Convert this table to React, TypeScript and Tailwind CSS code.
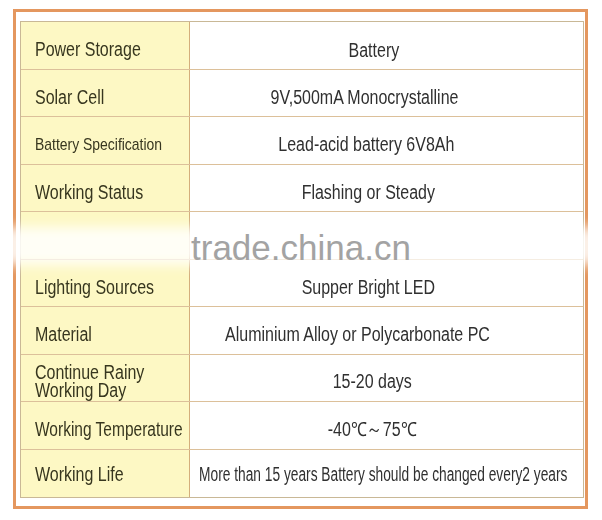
import React from 'react';

type Spec = {
  label: string;
  value: string;
  labelClass?: string;
  valueClass: string;
  valueScale?: string;
};

const specs: Spec[] = [
  { label: 'Power Storage', value: 'Battery', valueClass: 'pr-[26px] pt-[11px]' },
  { label: 'Solar Cell', value: '9V,500mA Monocrystalline', valueClass: 'pr-[44px] pt-[9px]' },
  { label: 'Battery Specification', value: 'Lead-acid battery 6V8Ah', labelClass: 'text-[17px] scale-x-[0.82]', valueClass: 'pr-[40px] pt-[9px]' },
  { label: 'Working Status', value: 'Flashing or Steady', valueClass: 'pr-[36px] pt-[9px]' },
  { label: '', value: '', valueClass: '' },
  { label: 'Lighting Sources', value: 'Supper Bright LED', valueClass: 'pr-[36px] pt-[9px]' },
  { label: 'Material', value: 'Aluminium Alloy or Polycarbonate PC', valueClass: 'pr-[58px] pt-[9px]' },
  { label: 'Continue Rainy\nWorking Day', value: '15-20 days', labelClass: 'leading-[18px] whitespace-pre-line scale-x-[0.82]', valueClass: 'pr-[28px] pt-[8px]' },
  { label: 'Working Temperature', value: '-40℃～75℃', labelClass: 'scale-x-[0.795]', valueClass: 'pr-[30px] pt-[8px]' },
  { label: 'Working Life', value: 'More than 15 years Battery should be changed every2 years', valueClass: 'pr-[6px] pt-[3px] text-[18px]', valueScale: 'scale-x-[0.705]' },
];

export default function App() {
  return (
    <div
      className="relative w-[602px] h-[520px] bg-white overflow-hidden"
      style={{ fontFamily: '"Liberation Sans", Arial, sans-serif' }}
    >
      <div className="ml-[13px] mt-[9px] w-[575px] h-[500px] border-[3px] border-[#e4975f] pl-[4px] pr-[1px] pt-[9px] pb-[9px]">
        <div className="border border-[#c9b896] flex flex-col">
          {specs.map((s, i) => (
            <div
              key={i}
              className={`flex h-[47.5px] ${i < specs.length - 1 ? 'border-b border-[#dcc09a]' : ''}`}
            >
              <div
                className={`w-[169px] shrink-0 bg-[#fdf8c4] border-r border-[#d4ae7c] flex items-center pl-[14px] text-[#37361f] text-[19.5px] whitespace-nowrap ${i === specs.length - 1 ? 'pt-[2px]' : i === 7 ? 'pt-[6px]' : 'pt-[9px]'}`}
              >
                <span className={`inline-block origin-left ${s.labelClass ?? 'scale-x-[0.82]'}`}>{s.label}</span>
              </div>
              <div
                className={`flex-1 min-w-0 flex items-center justify-center text-[#303030] text-[19.5px] whitespace-nowrap ${s.valueClass}`}
              >
                <span className={`inline-block shrink-0 origin-center ${s.valueScale ?? 'scale-x-[0.82]'}`}>{s.value}</span>
              </div>
            </div>
          ))}
        </div>
      </div>

      {/* watermark */}
      <div className="absolute left-0 right-0 top-[227px] h-[38px] bg-white/85 blur-[6px]" />
      <div className="absolute left-[191px] top-[226px] text-[35px] leading-[44px] text-[#a3a3a3]">
        trade.china.cn
      </div>
    </div>
  );
}
